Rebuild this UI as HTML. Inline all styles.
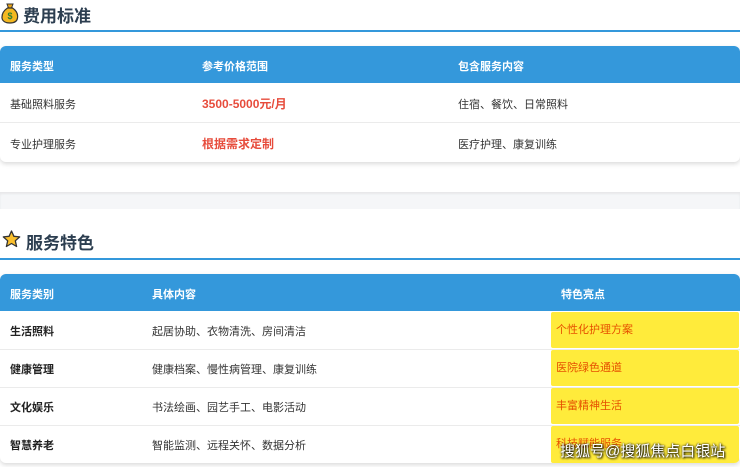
<!DOCTYPE html>
<html><head><meta charset="utf-8"><style>
*{margin:0;padding:0;box-sizing:border-box}
body{width:740px;height:467px;overflow:hidden;background:#fff;font-family:"Liberation Sans","Noto Sans CJK SC",sans-serif;position:relative}
.a{position:absolute;white-space:nowrap}
.t{font-size:17px;font-weight:bold;color:#2c3e50}
.line{position:absolute;left:0;width:740px;height:2px;background:#3498db}
.card{position:absolute;left:0;width:740px;background:#fff;border-radius:6px;box-shadow:0 2px 5px rgba(0,0,0,.15);overflow:hidden}
.hd{position:absolute;left:0;top:0;width:740px;background:#3498db}
.h{color:#fff;font-size:11px;font-weight:bold}
.c{font-size:11px;color:#333}
.r{font-size:12px;font-weight:bold;color:#e74c3c}
.b{font-size:11px;font-weight:bold;color:#222}
.sep{position:absolute;left:0;width:740px;height:1px;background:#ebebeb}
.y{position:absolute;left:551px;width:188px;background:#ffeb3b;color:#e65100;font-size:11px;padding-left:5px;border-radius:2px}
</style></head><body>
<svg class="a" style="left:1px;top:3px" width="18" height="21" viewBox="0 0 18 21">
 <path d="M6 1h6l-1.5 4h-3z" fill="#e8a317" stroke="#333" stroke-width="1"/>
 <path d="M6.5 5h5C16 8 17 12 16.5 15c-.5 3.5-3.5 5-7.5 5S1.5 18.5 1 15C.8 12 2 8 6.5 5z" fill="#f4b820" stroke="#333" stroke-width="1.2"/>
 <text x="9" y="16" font-size="9" font-weight="bold" text-anchor="middle" fill="#2e7d32" font-family="Liberation Sans">$</text>
</svg>
<div class="a t" style="left:23px;top:2px">费用标准</div>
<div class="line" style="top:30px"></div>
<div class="card" style="top:46px;height:116px">
 <div class="hd" style="height:37px"></div>
 <div class="a h" style="left:10px;top:12px">服务类型</div>
 <div class="a h" style="left:202px;top:12px">参考价格范围</div>
 <div class="a h" style="left:458px;top:12px">包含服务内容</div>
 <div class="a c" style="left:10px;top:50px">基础照料服务</div>
 <div class="a r" style="left:202px;top:49px">3500-5000元/月</div>
 <div class="a c" style="left:458px;top:50px">住宿、餐饮、日常照料</div>
 <div class="sep" style="top:76px"></div>
 <div class="a c" style="left:10px;top:90px">专业护理服务</div>
 <div class="a r" style="left:202px;top:89px">根据需求定制</div>
 <div class="a c" style="left:458px;top:90px">医疗护理、康复训练</div>
</div>
<div class="a" style="left:0;top:192px;width:740px;height:17px;background:#f5f6f8;box-shadow:inset 0 2px 2px rgba(0,0,0,.06)"></div>
<svg class="a" style="left:2px;top:230px" width="19" height="19" viewBox="0 0 19 19">
 <path d="M9.5 1l2.4 5.3 5.8.6-4.4 3.9 1.3 5.7-5.1-3-5.1 3 1.3-5.7L1.3 6.9l5.8-.6z" fill="#fbc02d" stroke="#333" stroke-width="1.3" stroke-linejoin="round"/>
</svg>
<div class="a t" style="left:26px;top:229px">服务特色</div>
<div class="line" style="top:258px"></div>
<div class="card" style="top:274px;height:189px">
 <div class="hd" style="height:37px"></div>
 <div class="a h" style="left:10px;top:12px">服务类别</div>
 <div class="a h" style="left:152px;top:12px">具体内容</div>
 <div class="a h" style="left:561px;top:12px">特色亮点</div>
 <div class="y" style="top:38px;height:36px;line-height:36px">个性化护理方案</div>
 <div class="y" style="top:76px;height:36px;line-height:36px">医院绿色通道</div>
 <div class="y" style="top:114px;height:36px;line-height:36px">丰富精神生活</div>
 <div class="y" style="top:152px;height:37px;line-height:36px">科技赋能服务</div>
 <div class="sep" style="top:75px"></div><div class="sep" style="top:113px"></div><div class="sep" style="top:151px"></div>
 <div class="a b" style="left:10px;top:49px">生活照料</div>
 <div class="a c" style="left:152px;top:49px">起居协助、衣物清洗、房间清洁</div>
 <div class="a b" style="left:10px;top:87px">健康管理</div>
 <div class="a c" style="left:152px;top:87px">健康档案、慢性病管理、康复训练</div>
 <div class="a b" style="left:10px;top:125px">文化娱乐</div>
 <div class="a c" style="left:152px;top:125px">书法绘画、园艺手工、电影活动</div>
 <div class="a b" style="left:10px;top:163px">智慧养老</div>
 <div class="a c" style="left:152px;top:163px">智能监测、远程关怀、数据分析</div>
</div>
<div class="a" style="left:560px;top:440px;font-size:15px;color:#fff;text-shadow:1px 1px 2px #000,0 0 2px #000">搜狐号@搜狐焦点白银站</div>
</body></html>
